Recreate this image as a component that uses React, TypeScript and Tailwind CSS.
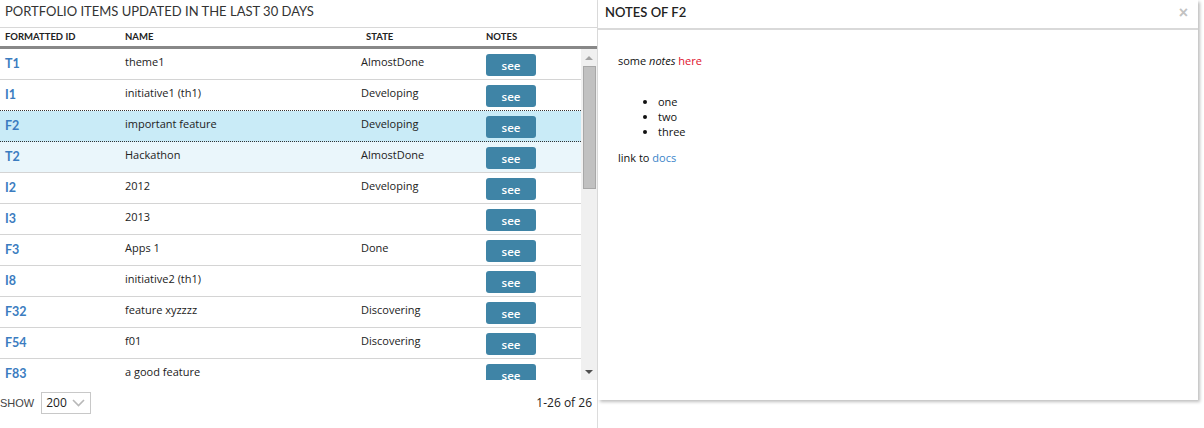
import React from 'react';

type Row = { id: string; name: string; state: string; mode?: 'selected' | 'hover' };

const rows: Row[] = [
  { id: 'T1', name: 'theme1', state: 'AlmostDone' },
  { id: 'I1', name: 'initiative1 (th1)', state: 'Developing' },
  { id: 'F2', name: 'important feature', state: 'Developing', mode: 'selected' },
  { id: 'T2', name: 'Hackathon', state: 'AlmostDone', mode: 'hover' },
  { id: 'I2', name: '2012', state: 'Developing' },
  { id: 'I3', name: '2013', state: '' },
  { id: 'F3', name: 'Apps 1', state: 'Done' },
  { id: 'I8', name: 'initiative2 (th1)', state: '' },
  { id: 'F32', name: 'feature xyzzzz', state: 'Discovering' },
  { id: 'F54', name: 'f01', state: 'Discovering' },
  { id: 'F83', name: 'a good feature', state: '' },
];

const lato = { fontFamily: 'Lato, "Open Sans", sans-serif' };

function ItemRow({ row, next }: { row: Row; next?: Row }) {
  const bg =
    row.mode === 'selected' ? 'bg-[#c9ebf7]' : row.mode === 'hover' ? 'bg-[#eaf6fb]' : 'bg-white';
  const dotted = row.mode === 'selected' || next?.mode === 'selected';
  return (
    <div
      className={`flex h-[31px] shrink-0 items-center border-b ${
        dotted ? 'border-dotted border-[#333]' : 'border-solid border-[#d4d4d4]'
      } ${bg}`}
    >
      <div className="w-[125px] pl-[5px] text-[12.5px] font-bold text-[#3b7cc0]" style={lato}>
        {row.id}
      </div>
      <div className="w-[236px] pb-[4px] text-[11px] text-[#222]">{row.name}</div>
      <div className="w-[125px] pb-[3px] text-[11px] text-[#222]">{row.state}</div>
      <div className="pt-[2px]">
        <button className="flex h-[22px] w-[50px] items-center justify-center rounded-[3px] bg-[#3f84a6] pt-[1px] text-[11.5px] font-semibold text-white">
          see
        </button>
      </div>
    </div>
  );
}

export default function App() {
  return (
    <div
      className="flex h-[428px] w-[1204px] overflow-hidden bg-white text-[#222]"
      style={{ fontFamily: '"Open Sans", sans-serif' }}
    >
      {/* left: portfolio list */}
      <div className="flex w-[598px] shrink-0 flex-col border-r border-[#dcdcdc]">
        <div
          className="flex h-[28px] items-center border-b border-[#d8d8d8] pl-[5px] pb-[4px] text-[13px] text-[#333]"
          style={lato}
        >
          PORTFOLIO ITEMS UPDATED IN THE LAST 30 DAYS
        </div>
        <div
          className="flex h-[21px] items-center border-b-[3px] border-[#888] pt-[1px] text-[9.5px] font-bold text-[#222]"
          style={lato}
        >
          <div className="w-[125px] pl-[5px]">FORMATTED ID</div>
          <div className="w-[241px]">NAME</div>
          <div className="w-[120px]">STATE</div>
          <div>NOTES</div>
        </div>
        <div className="flex h-[331px]">
          <div className="flex flex-1 flex-col overflow-hidden">
            {rows.map((r, i) => (
              <ItemRow key={r.id} row={r} next={rows[i + 1]} />
            ))}
          </div>
          <div className="flex w-[16px] flex-col items-center bg-[#f0f0f0]">
            <div className="flex h-[17px] w-full items-center justify-center">
              <div className="h-0 w-0 border-x-[4px] border-b-[4px] border-x-transparent border-b-[#a3a3a3]" />
            </div>
            <div className="h-[123px] w-[13px] border border-[#a8a8a8] bg-[#c1c1c1]" />
            <div className="flex-1" />
            <div className="flex h-[17px] w-full items-center justify-center">
              <div className="h-0 w-0 border-x-[4px] border-t-[4px] border-x-transparent border-t-[#505050]" />
            </div>
          </div>
        </div>
        <div className="flex h-[44px] items-start justify-between pt-[12px] pr-[5px]">
          <div className="flex items-center gap-[7px]">
            <span className="text-[11px] text-[#444]" style={{ fontFamily: '"Liberation Sans", sans-serif' }}>
              SHOW
            </span>
            <div className="flex h-[22px] w-[50px] items-center justify-between border border-[#c8c8c8] pl-[4px] pr-[5px]">
              <span className="text-[12px] text-[#222]">200</span>
              <svg width="13" height="8" viewBox="0 0 13 8" fill="none">
                <path d="M1 1l5.5 5.5L12 1" stroke="#b8b8b8" strokeWidth="1.6" />
              </svg>
            </div>
          </div>
          <div className="pt-[2px] text-[12px] text-[#222]">1-26 of 26</div>
        </div>
      </div>

      {/* right: notes panel */}
      <div className="flex h-[400px] w-[600px] flex-col bg-white shadow-[2px_2px_3px_rgba(0,0,0,0.25)]">
        <div className="flex h-[30px] shrink-0 items-center justify-between border-b-2 border-[#d9d9d9] pl-[7px] pr-[10px] pb-[2px]">
          <span className="text-[13px] font-semibold text-[#222]" style={lato}>
            NOTES OF F2
          </span>
          <span className="text-[16px] font-bold text-[#c2c2c2]" style={{ fontFamily: '"Liberation Sans", sans-serif' }}>
            ×
          </span>
        </div>
        <div className="px-[20px] pt-[23px] text-[11px] leading-[15px] text-[#111]">
          <p>
            some <em>notes</em> <span className="text-[#e0102c]">here</span>
          </p>
          <ul className="mt-[26px] list-disc pl-[40px]">
            <li>one</li>
            <li>two</li>
            <li>three</li>
          </ul>
          <p className="mt-[11px]">
            link to <a className="text-[#3a84c9]">docs</a>
          </p>
        </div>
      </div>
    </div>
  );
}
